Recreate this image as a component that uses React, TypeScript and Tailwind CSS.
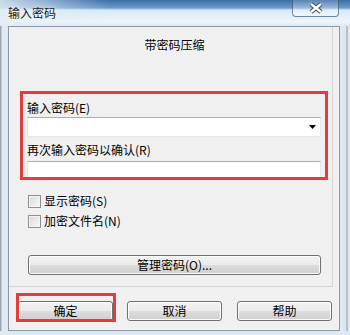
import React from "react";

const btn =
  "h-[20px] border border-[#707070] rounded-[3px] bg-[linear-gradient(to_bottom,#f2f2f2_0%,#ebebeb_50%,#dddddd_50%,#cfcfcf_100%)] shadow-[inset_0_0_0_1px_#fcfcfc] flex items-center justify-center text-[12px] leading-[14px] text-black";

function Check({ label }: { label: string }) {
  return (
    <div className="flex items-center h-[14px] ml-[1px]">
      <div className="w-[13px] h-[13px] border border-[#8e8f8f] bg-[linear-gradient(135deg,#d8d8d8,#fbfbfb)] shadow-[inset_0_0_0_1px_#f4f4f4]" />
      <span className="ml-[3px] text-[12px] leading-[14px] text-black">{label}</span>
    </div>
  );
}

export default function App() {
  return (
    <div className="w-[350px] h-[335px] relative overflow-hidden bg-[#dde8f2] font-['Noto_Sans_CJK_SC',sans-serif]">
      {/* title bar */}
      <div className="h-[26px] flex items-start bg-[linear-gradient(to_right,rgba(226,236,246,0.85),rgba(226,236,246,0)_110px),linear-gradient(to_bottom,#3b6ea6_0px,#6e9acb_8px,#d6e9f8_10px,#eef5fb_22px,#dde8f2_26px)]">
        <span className="ml-[8px] mt-[6px] text-[12px] leading-[14px] text-[#1b1b1b] [text-shadow:0_0_6px_#fff]">
          输入密码
        </span>
        <div className="ml-auto mr-[11px] w-[47px] h-[17px] border border-t-0 border-[rgba(55,75,100,0.65)] rounded-b-[4px] bg-[linear-gradient(to_bottom,rgba(255,255,255,0.15),rgba(255,255,255,0.45))] flex items-center justify-center">
          <svg width="16" height="12" viewBox="0 0 16 12">
            <path d="M3 2 L13 10 M13 2 L3 10" stroke="#3a4a5c" strokeWidth="4.5" />
            <path d="M3 2 L13 10 M13 2 L3 10" stroke="#ffffff" strokeWidth="2.4" />
          </svg>
        </div>
      </div>

      <div className="flex h-[305px]">
        <div className="w-[8px] bg-[linear-gradient(to_right,#9aa8b6_0px,#9aa8b6_1px,#e3ecf4_2px,#dde8f2_8px)]" />
        <div className="w-[332px] h-[305px] border border-[#8a98a6] bg-[#f0f0f0] flex flex-col">
          {/* inner panel */}
          <div className="w-[324px] h-[260px] border-r border-b border-[#d5d5d5] flex flex-col">
            <div className="mt-[11px] pl-[8px] text-center text-[12px] leading-[14px] text-black">
              带密码压缩
            </div>
            <div className="pl-[18px] flex flex-col">
              <div className="mt-[49px] text-[12px] leading-[14px] text-black">输入密码(E)</div>
              <div className="mt-[2px] w-[294px] h-[20px] bg-white border border-[#e3e9ef] border-t-[#abadb3] flex items-center justify-end pr-[4px]">
                <svg width="7" height="4" viewBox="0 0 7 4">
                  <path d="M0 0 H7 L3.5 4 Z" fill="#000" />
                </svg>
              </div>
              <div className="mt-[6px] text-[12px] leading-[14px] text-black">再次输入密码以确认(R)</div>
              <div className="mt-[4px] w-[294px] h-[20px] bg-white border border-[#e3e9ef] border-t-[#abadb3]" />
              <div className="mt-[13px]">
                <Check label="显示密码(S)" />
              </div>
              <div className="mt-[6px]">
                <Check label="加密文件名(N)" />
              </div>
              <div className={`mt-[27px] ml-[1px] w-[293px] ${btn}`}>管理密码(O)...</div>
            </div>
          </div>
          {/* bottom buttons */}
          <div className="mt-[14px] flex">
            <div className={`ml-[9px] w-[95px] ${btn}`}>确定</div>
            <div className={`ml-[14px] w-[95px] ${btn}`}>取消</div>
            <div className={`ml-[15px] w-[95px] ${btn}`}>帮助</div>
          </div>
        </div>
        <div className="flex-1 bg-[linear-gradient(to_right,#e3ecf4_0px,#d9e4ee_6px,#8e9aa6_7px,#e6e6e6_8px)]" />
      </div>

      {/* red annotation boxes */}
      <div className="absolute left-[20px] top-[91px] w-[308px] h-[89px] border-[3px] border-[#e23c3c]" />
      <div className="absolute left-[16px] top-[293px] w-[100px] h-[29px] border-[3px] border-[#e23c3c]" />
    </div>
  );
}
